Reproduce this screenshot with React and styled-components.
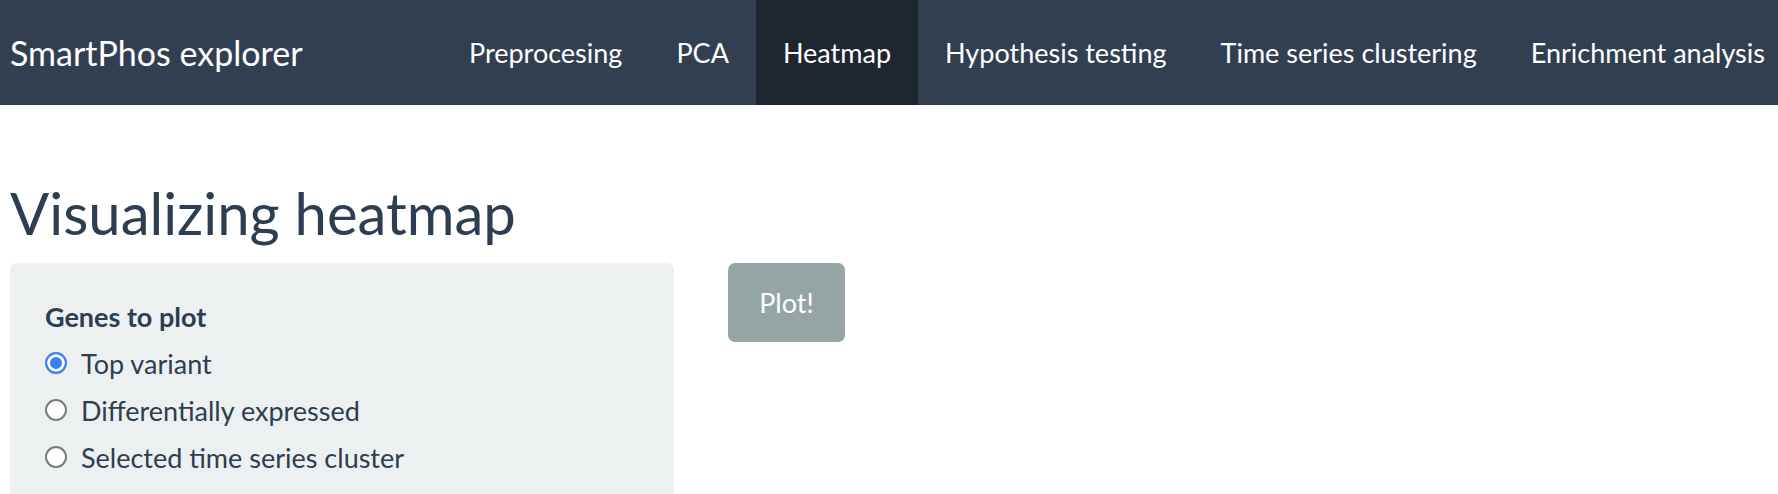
import styled, {createGlobalStyle} from "styled-components";

const GlobalStyle = createGlobalStyle`
    body{
        margin: 0;
        font-family: Lato, "Noto Sans", sans-serif;
        color: #2c3e50;
        background: white;
    }
`;

const Navbar = styled.nav`
    height: 105px;
    background: #323f51;
    display: flex;
    align-items: stretch;
    overflow: hidden;
    white-space: nowrap;
`;

const Brand = styled.div`
    flex: 0 0 442px;
    padding-left: 10px;
    box-sizing: border-box;
    display: flex;
    align-items: center;
    color: white;
    font-size: 34px;
`;

const NavList = styled.div`
    display: flex;
    flex-shrink: 0;
`;

const NavItem = styled.a`
    display: flex;
    align-items: center;
    padding: 0 27px;
    font-size: 27px;
    color: white;
    text-decoration: none;
    background: ${props => props.$active ? "#1e2630" : "transparent"};
`;

const Main = styled.main`
    padding: 0 10px;
`;

const Title = styled.h2`
    font-size: 58px;
    font-weight: 400;
    line-height: 1.1;
    margin: 76px 0 18px;
`;

const Row = styled.div`
    display: flex;
    align-items: flex-start;
    gap: 54px;
`;

const Well = styled.div`
    width: 664px;
    box-sizing: border-box;
    background: #ecf0f1;
    border-radius: 7px;
    padding: 35px;
`;

const GroupLabel = styled.div`
    font-size: 27px;
    font-weight: 700;
    line-height: 37px;
    margin-bottom: 10px;
`;

const Option = styled.label`
    display: flex;
    align-items: center;
    gap: 14px;
    font-size: 27px;
    line-height: 37px;
    margin-bottom: 10px;
`;

const Radio = styled.input`
    appearance: none;
    width: 22px;
    height: 22px;
    margin: 0;
    border-radius: 50%;
    box-sizing: border-box;
    border: 2px solid #7b7b7b;
    background: white;
    &:checked{
        border-color: #3b7ff2;
        background: #3b7ff2;
        box-shadow: inset 0 0 0 3px white;
    }
`;

const PlotButton = styled.button`
    width: 117px;
    height: 79px;
    border: none;
    border-radius: 7px;
    background: #95a5a6;
    color: white;
    font-family: Lato, "Noto Sans", sans-serif;
    font-size: 27px;
    cursor: pointer;
`;

const tabs = ["Preprocesing", "PCA", "Heatmap", "Hypothesis testing", "Time series clustering", "Enrichment analysis"];
const options = ["Top variant", "Differentially expressed", "Selected time series cluster"];

const App = () => {
    return(
        <>
            <GlobalStyle />
            <Navbar>
                <Brand>SmartPhos explorer</Brand>
                <NavList>
                    {tabs.map(t => <NavItem key={t} href="#" $active={t === "Heatmap"}>{t}</NavItem>)}
                </NavList>
            </Navbar>
            <Main>
                <Title>Visualizing heatmap</Title>
                <Row>
                    <Well>
                        <GroupLabel>Genes to plot</GroupLabel>
                        {options.map((o, i) => (
                            <Option key={o}>
                                <Radio type="radio" name="genes" defaultChecked={i === 0} />
                                {o}
                            </Option>
                        ))}
                    </Well>
                    <PlotButton>Plot!</PlotButton>
                </Row>
            </Main>
        </>
    )
}

export default App;
